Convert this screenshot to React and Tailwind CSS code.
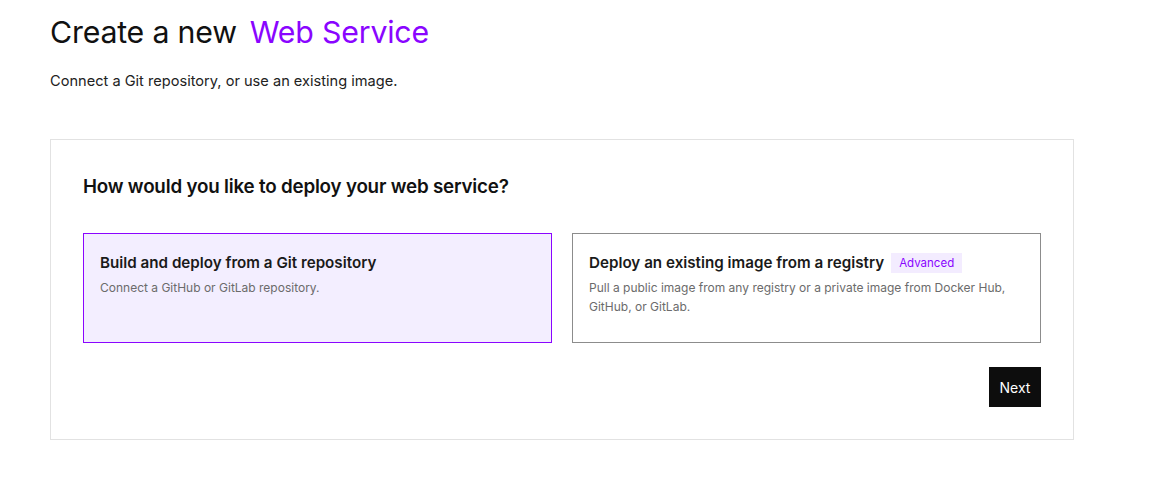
import React, { useState } from 'react';

const options = [
  {
    id: 'git',
    title: 'Build and deploy from a Git repository',
    desc: 'Connect a GitHub or GitLab repository.',
    badge: null,
  },
  {
    id: 'image',
    title: 'Deploy an existing image from a registry',
    desc: 'Pull a public image from any registry or a private image from Docker Hub, GitHub, or GitLab.',
    badge: 'Advanced',
  },
];

const App = () => {
  const [selected, setSelected] = useState('git');

  return (
    <div className="min-h-screen bg-white px-[50px] pt-[14px] font-['Inter',sans-serif] text-[#111]">
      {/* Header */}
      <h1 className="flex items-baseline gap-[13px] text-[30.3px] leading-[36px] tracking-[-0.2px]">
        <span>Create a new</span>
        <span className="text-[#8a05ff]">Web Service</span>
      </h1>
      <p className="mt-[21px] text-[14.6px] leading-[20px] text-[#222]">
        Connect a Git repository, or use an existing image.
      </p>

      {/* Panel */}
      <div className="mt-[48px] w-[1024px] border border-[#e2e2e2] px-[32px] pt-[34px] pb-[32px]">
        <h2 className="text-[18.8px] font-semibold leading-[26px] tracking-[-0.2px]">
          How would you like to deploy your web service?
        </h2>

        <div className="mt-[33px] grid grid-cols-2 gap-[20px]">
          {options.map((opt) => {
            const isActive = selected === opt.id;
            return (
              <div
                key={opt.id}
                onClick={() => setSelected(opt.id)}
                className={`h-[110px] cursor-pointer border px-[16px] pt-[17px] ${
                  isActive ? 'border-[#8a05ff] bg-[#f3eeff]' : 'border-[#8c8c8c] bg-white'
                }`}
              >
                <div className="flex items-center gap-[7px]">
                  <span className="text-[15.2px] font-semibold leading-[24px] text-[#1a1a1a]">{opt.title}</span>
                  {opt.badge && (
                    <span className="bg-[#f3ecff] px-[8px] text-[11.5px] leading-[20px] text-[#8a05ff]">
                      {opt.badge}
                    </span>
                  )}
                </div>
                <p className="mt-[3px] pr-[12px] text-[12px] leading-[19px] text-[#6b6b6b]">{opt.desc}</p>
              </div>
            );
          })}
        </div>

        <div className="mt-[24px] flex justify-end">
          <button className="h-[40px] w-[52px] bg-[#0d0d0d] text-[14px] text-white">Next</button>
        </div>
      </div>
    </div>
  );
};

export default App;
